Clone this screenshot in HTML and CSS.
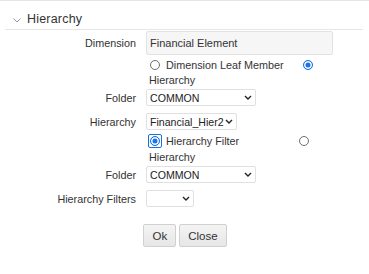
FILE: index.html
```html
<!DOCTYPE html>
<html lang="en">
<head>
    <meta charset="UTF-8">
    <meta name="viewport" content="width=device-width, initial-scale=1.0">
    <link rel="stylesheet" href="styles.css">
    <title>Hierarchy</title>
</head>
<body>

    <div class="panel">
        <div class="panel-head">
            <svg class="panel-chevron" viewBox="0 0 8 5">
                <path d="M0.5 0.5 L4 4 L7.5 0.5" fill="none" stroke="#9a9a9a" stroke-width="1"/>
            </svg>
            <span class="panel-title">Hierarchy</span>
        </div>

        <div class="form">
            <div class="form-label">Dimension</div>
            <div class="form-value">
                <input class="text-input" value="Financial Element" readonly>
            </div>

            <div class="form-label"></div>
            <div class="form-value choice-group">
                <div class="choice-line">
                    <label class="choice">
                        <span class="radio-box"><input type="radio" name="mode1" class="radio"></span>
                        Dimension Leaf Member
                    </label>
                    <span class="radio-box radio-box-alt"><input type="radio" name="mode1" class="radio" checked></span>
                </div>
                <div class="choice-wrap">Hierarchy</div>
            </div>

            <div class="form-label">Folder</div>
            <div class="form-value">
                <div class="select-wrap select-wide">
                    <select class="select"><option>COMMON</option></select>
                    <svg class="select-arrow" viewBox="0 0 8 5"><path d="M1 1 L4 4 L7 1" fill="none" stroke="#222" stroke-width="1.4"/></svg>
                </div>
            </div>

            <div class="form-label">Hierarchy</div>
            <div class="form-value">
                <div class="select-wrap select-mid">
                    <select class="select"><option>Financial_Hier2</option></select>
                    <svg class="select-arrow" viewBox="0 0 8 5"><path d="M1 1 L4 4 L7 1" fill="none" stroke="#222" stroke-width="1.4"/></svg>
                </div>
            </div>

            <div class="form-label"></div>
            <div class="form-value choice-group">
                <div class="choice-line">
                    <label class="choice">
                        <span class="radio-box radio-focus"><input type="radio" name="mode2" class="radio" checked></span>
                        Hierarchy Filter
                    </label>
                    <span class="radio-box"><input type="radio" name="mode2" class="radio"></span>
                </div>
                <div class="choice-wrap">Hierarchy</div>
            </div>

            <div class="form-label">Folder</div>
            <div class="form-value">
                <div class="select-wrap select-wide">
                    <select class="select"><option>COMMON</option></select>
                    <svg class="select-arrow" viewBox="0 0 8 5"><path d="M1 1 L4 4 L7 1" fill="none" stroke="#222" stroke-width="1.4"/></svg>
                </div>
            </div>

            <div class="form-label">Hierarchy Filters</div>
            <div class="form-value">
                <div class="select-wrap select-small">
                    <select class="select"><option></option></select>
                    <svg class="select-arrow" viewBox="0 0 8 5"><path d="M1 1 L4 4 L7 1" fill="none" stroke="#222" stroke-width="1.4"/></svg>
                </div>
            </div>
        </div>

        <div class="actions">
            <button class="btn">Ok</button>
            <button class="btn">Close</button>
        </div>
    </div>

</body>
</html>
```

FILE: styles.css
```css
* {
    margin: 0;
    padding: 0;
    box-sizing: border-box;
}

body {
    width: 369px;
    height: 274px;
    background-color: white;
    font-family: "Liberation Sans", Arial, sans-serif;
    font-size: 10.8px;
    color: #333;
}

.panel {
    border-top: 1px solid #e4e4e4;
}

.panel-head {
    display: flex;
    align-items: center;
    height: 29px;
    margin: 0 6px 0 5px;
    padding-left: 8px;
    padding-top: 8px;
    border-bottom: 1px solid #e6e6e6;
}
.panel-chevron {
    width: 8px;
    height: 5px;
    margin-top: 2px;
}
.panel-title {
    margin-left: 6px;
    font-size: 12.5px;
    letter-spacing: 0.2px;
    color: #333;
}

.form {
    display: grid;
    grid-template-columns: 136px 200px;
    column-gap: 10px;
    row-gap: 7px;
    align-items: center;
}
.form-label {
    text-align: right;
}

.text-input {
    display: block;
    width: 187px;
    height: 24px;
    margin-top: 1px;
    padding: 0 3px;
    border: 1px solid #e2e2e2;
    border-radius: 2px;
    background-color: #f6f6f6;
    font-family: inherit;
    font-size: 11px;
    color: #333;
}
.text-input:focus {
    outline: none;
}

.choice-group {
    margin: -4px 0 -5px;
    padding-left: 2px;
    line-height: 14px;
}
.choice-line {
    display: flex;
    align-items: center;
}
.choice {
    display: flex;
    align-items: center;
    width: 149px;
    gap: 4px;
}
.choice-wrap {
    margin-top: 1px;
    padding-left: 1px;
}

.radio-box {
    display: flex;
    align-items: center;
    justify-content: center;
    width: 14px;
    height: 14px;
}
.radio-box-alt {
    margin-left: 4px;
}
.radio-focus {
    margin: 1px 0;
    border: 1.5px solid #1a6fdc;
    border-radius: 2px;
}
.radio {
    appearance: none;
    width: 10px;
    height: 10px;
    border: 1px solid #6f6f6f;
    border-radius: 50%;
    background-color: white;
}
.radio:checked {
    border-color: #1a73e8;
    background-color: #1a73e8;
    box-shadow: inset 0 0 0 1.5px white;
}
.radio:focus {
    outline: none;
}

.select-wrap {
    position: relative;
    height: 17px;
}
.select-wide {
    width: 110px;
}
.select-mid {
    width: 91px;
}
.select-small {
    width: 48px;
}
.select {
    appearance: none;
    display: block;
    width: 100%;
    height: 100%;
    padding: 0 12px 0 3px;
    border: 1px solid #e0e0e0;
    border-radius: 2px;
    background-color: white;
    font-family: inherit;
    font-size: 10.6px;
    color: #222;
}
.select-arrow {
    position: absolute;
    right: 4px;
    top: 6px;
    width: 8px;
    height: 5px;
    pointer-events: none;
}

.actions {
    display: flex;
    justify-content: center;
    gap: 3px;
    margin-top: 17px;
    padding-left: 1px;
}
.btn {
    height: 23px;
    padding: 0 8px;
    border: 1px solid #d0d0d0;
    border-radius: 2px;
    background: linear-gradient(#f4f4f4, #e6e6e6);
    font-family: inherit;
    font-size: 11.5px;
    color: #333;
}
```
